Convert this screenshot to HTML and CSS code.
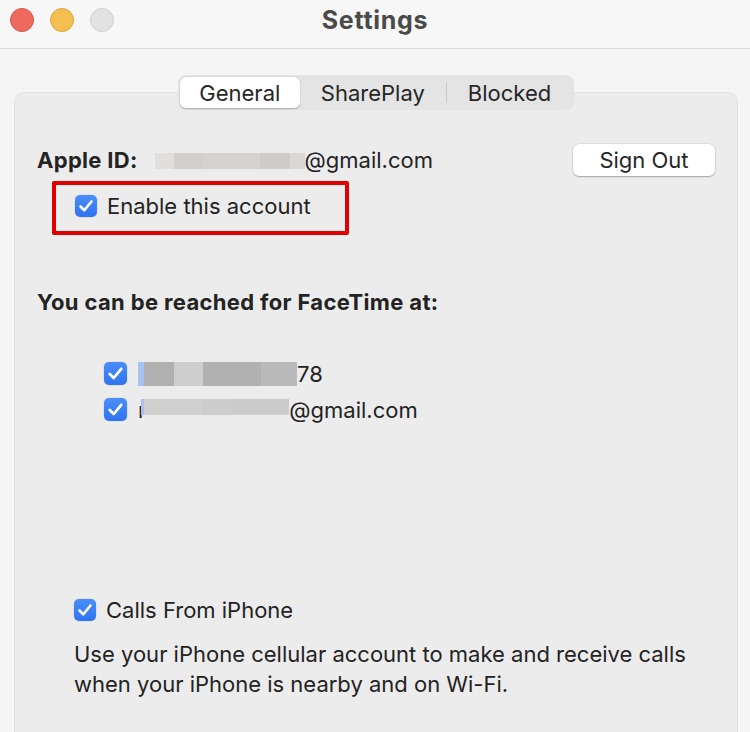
FILE: index.html
```html
<!DOCTYPE html>
<html>
<head>
<meta charset="utf-8">
<link rel="stylesheet" href="styles.css">
</head>
<body>
<div class="window">
  <header class="titlebar">
    <div class="lights">
      <span class="light red"></span>
      <span class="light yellow"></span>
      <span class="light gray"></span>
    </div>
    <div class="title">Settings</div>
    <div></div>
  </header>
  <main class="content">
    <nav class="tabs">
      <span class="tab active">General</span>
      <span class="tab">SharePlay</span>
      <span class="sep"></span>
      <span class="tab">Blocked</span>
    </nav>
    <section class="panel">
      <div class="idrow">
        <div class="idleft">
          <span class="label">Apple ID:</span>
          <span class="blur blur-id">
            <i style="width:19px;background:#e3dede"></i><i style="width:29px;background:#d4cfcf"></i><i style="width:57px;background:#d7d2d2"></i><i style="width:30px;background:#d0cbcb"></i><i style="width:15px;background:#dcd7d7"></i>
          </span><span class="txt">@gmail.com</span>
        </div>
        <button class="btn">Sign Out</button>
      </div>
      <div class="highlight">
        <label class="check">
          <span class="box"><svg viewBox="0 0 22 22"><path d="M5.5 11.5 L9.3 15.3 L16.5 6.5"/></svg></span>
          <span class="txt">Enable this account</span>
        </label>
      </div>
      <h2 class="heading">You can be reached for FaceTime at:</h2>
      <ul class="list">
        <li class="check">
          <span class="box"><svg viewBox="0 0 22 22"><path d="M5.5 11.5 L9.3 15.3 L16.5 6.5"/></svg></span>
          <span class="blur blur-phone"><i style="width:6px;background:#a8c2f2"></i><i style="width:30px;background:#b0b0b0"></i><i style="width:29px;background:#cecece"></i><i style="width:58px;background:#b1b1b1"></i><i style="width:36px;background:#b9b9b9"></i></span><span class="txt">78</span>
        </li>
        <li class="check">
          <span class="box"><svg viewBox="0 0 22 22"><path d="M5.5 11.5 L9.3 15.3 L16.5 6.5"/></svg></span>
          <span class="txt">r</span><span class="blur blur-mail"><i style="width:3px;background:#a8c2f2"></i><i style="width:58px;background:#d0d0d0"></i><i style="width:29px;background:#cdcdcd"></i><i style="width:58px;background:#cbcbcb"></i></span><span class="txt">@gmail.com</span>
        </li>
      </ul>
      <div class="calls">
        <label class="check">
          <span class="box"><svg viewBox="0 0 22 22"><path d="M5.5 11.5 L9.3 15.3 L16.5 6.5"/></svg></span>
          <span class="txt">Calls From iPhone</span>
        </label>
        <p class="desc">Use your iPhone cellular account to make and receive calls when your iPhone is nearby and on Wi-Fi.</p>
      </div>
    </section>
  </main>
</div>
</body>
</html>
```

FILE: styles.css
```css
* { box-sizing: border-box; }
html, body { margin: 0; padding: 0; }
body {
  font-family: Inter, "Liberation Sans", sans-serif;
  color: #232323;
  background: #f5f5f5;
}
.window {
  width: 750px;
  height: 732px;
  overflow: hidden;
  background: #f5f5f5;
  display: flex;
  flex-direction: column;
}
.titlebar {
  height: 49px;
  flex: none;
  display: grid;
  grid-template-columns: 1fr auto 1fr;
  align-items: center;
  background: #f7f7f7;
  border-bottom: 1px solid #d8d8d8;
  padding-bottom: 9px;
}
.lights {
  display: flex;
  gap: 16px;
  padding-left: 10px;
}
.light {
  width: 24px;
  height: 24px;
  border-radius: 50%;
  display: block;
}
.red { background: #ee6a5f; border: 1px solid #d9534a; }
.yellow { background: #f5bf4f; border: 1px solid #dba53b; }
.gray { background: #e2e2e2; border: 1px solid #cfcfcf; }
.title {
  font-size: 25px;
  font-weight: 700;
  color: #4a4a4a;
  letter-spacing: 0.7px;
  line-height: 30px;
}
.content {
  flex: 1;
  display: flex;
  flex-direction: column;
  align-items: center;
  padding: 26px 12px 0 14px;
}
.tabs {
  position: relative;
  z-index: 1;
  display: flex;
  align-items: center;
  height: 35px;
  padding: 2px;
  background: #e4e4e4;
  border-radius: 8px;
  margin-bottom: -18px;
  margin-left: 0;
  font-size: 22px;
  color: #262626;
}
.tab {
  height: 31px;
  display: flex;
  align-items: center;
  padding: 0 21px;
}
.tab.active {
  background: #fff;
  border-radius: 6px;
  box-shadow: 0 0.5px 1.5px rgba(0,0,0,0.25);
  width: 120px;
  justify-content: center;
  padding: 0;
}
.sep {
  width: 1px;
  height: 20px;
  background: #c9c9c9;
}
.panel {
  align-self: stretch;
  flex: 1;
  background: #ececec;
  border: 1px solid #e1e1e1;
  border-bottom: none;
  border-radius: 10px 10px 0 0;
  padding: 50px 22px 0 22px;
  display: flex;
  flex-direction: column;
}
.idrow {
  display: flex;
  align-items: center;
  justify-content: space-between;
  height: 34px;
}
.idleft {
  display: flex;
  align-items: center;
  font-size: 22px;
}
.label {
  font-weight: 700;
  letter-spacing: 0.3px;
  margin-right: 17px;
}
.blur { display: inline-flex; }
.blur i { display: block; }
.blur-id { height: 16px; margin-top: 1px; }
.btn {
  font: inherit;
  font-size: 22px;
  color: #262626;
  width: 142px;
  height: 32px;
  padding: 0;
  background: #fff;
  border: none;
  border-radius: 6px;
  box-shadow: 0 0 0 0.5px rgba(0,0,0,0.12), 0 1px 1.5px rgba(0,0,0,0.25);
}
.highlight {
  align-self: flex-start;
  margin-left: 15px;
  margin-top: 4px;
  width: 297px;
  height: 54px;
  border: 4px solid #e00000;
  border-radius: 2px;
  display: flex;
  align-items: center;
  padding-left: 19px;
  padding-bottom: 5px;
}
.check {
  display: flex;
  align-items: center;
  font-size: 22px;
}
.box {
  width: 22px;
  height: 22px;
  border-radius: 5px;
  background: linear-gradient(#4a8ef9, #2f74f0);
  box-shadow: 0 0 0 0.5px rgba(0,0,0,0.1);
  margin-right: 10px;
  flex: none;
  display: block;
}
.box svg { width: 22px; height: 22px; display: block; }
.box path {
  fill: none;
  stroke: #fff;
  stroke-width: 2.6;
  stroke-linecap: round;
  stroke-linejoin: round;
}
.heading {
  margin: 51px 0 0 0;
  font-size: 22px;
  font-weight: 700;
  letter-spacing: 0.35px;
  line-height: 32px;
  color: #232323;
}
.list {
  list-style: none;
  margin: 44px 0 0 0;
  padding: 0 0 0 67px;
  display: flex;
  flex-direction: column;
  gap: 13px;
}
.list .check { height: 23px; }
.list .box { width: 23px; height: 23px; margin-right: 11px; }
.list .box svg { width: 23px; height: 23px; }
.blur-phone { height: 24px; }
.blur-mail {
  height: 16px;
  margin-top: -5px;
  margin-left: -5px;
  position: relative;
}
.calls {
  margin-top: auto;
  margin-bottom: 33px;
  padding-left: 37px;
}
.calls .check { height: 24px; }
.desc {
  margin: 17px 0 0 0;
  font-size: 22px;
  line-height: 30px;
  color: #232323;
  width: 630px;
}
```
